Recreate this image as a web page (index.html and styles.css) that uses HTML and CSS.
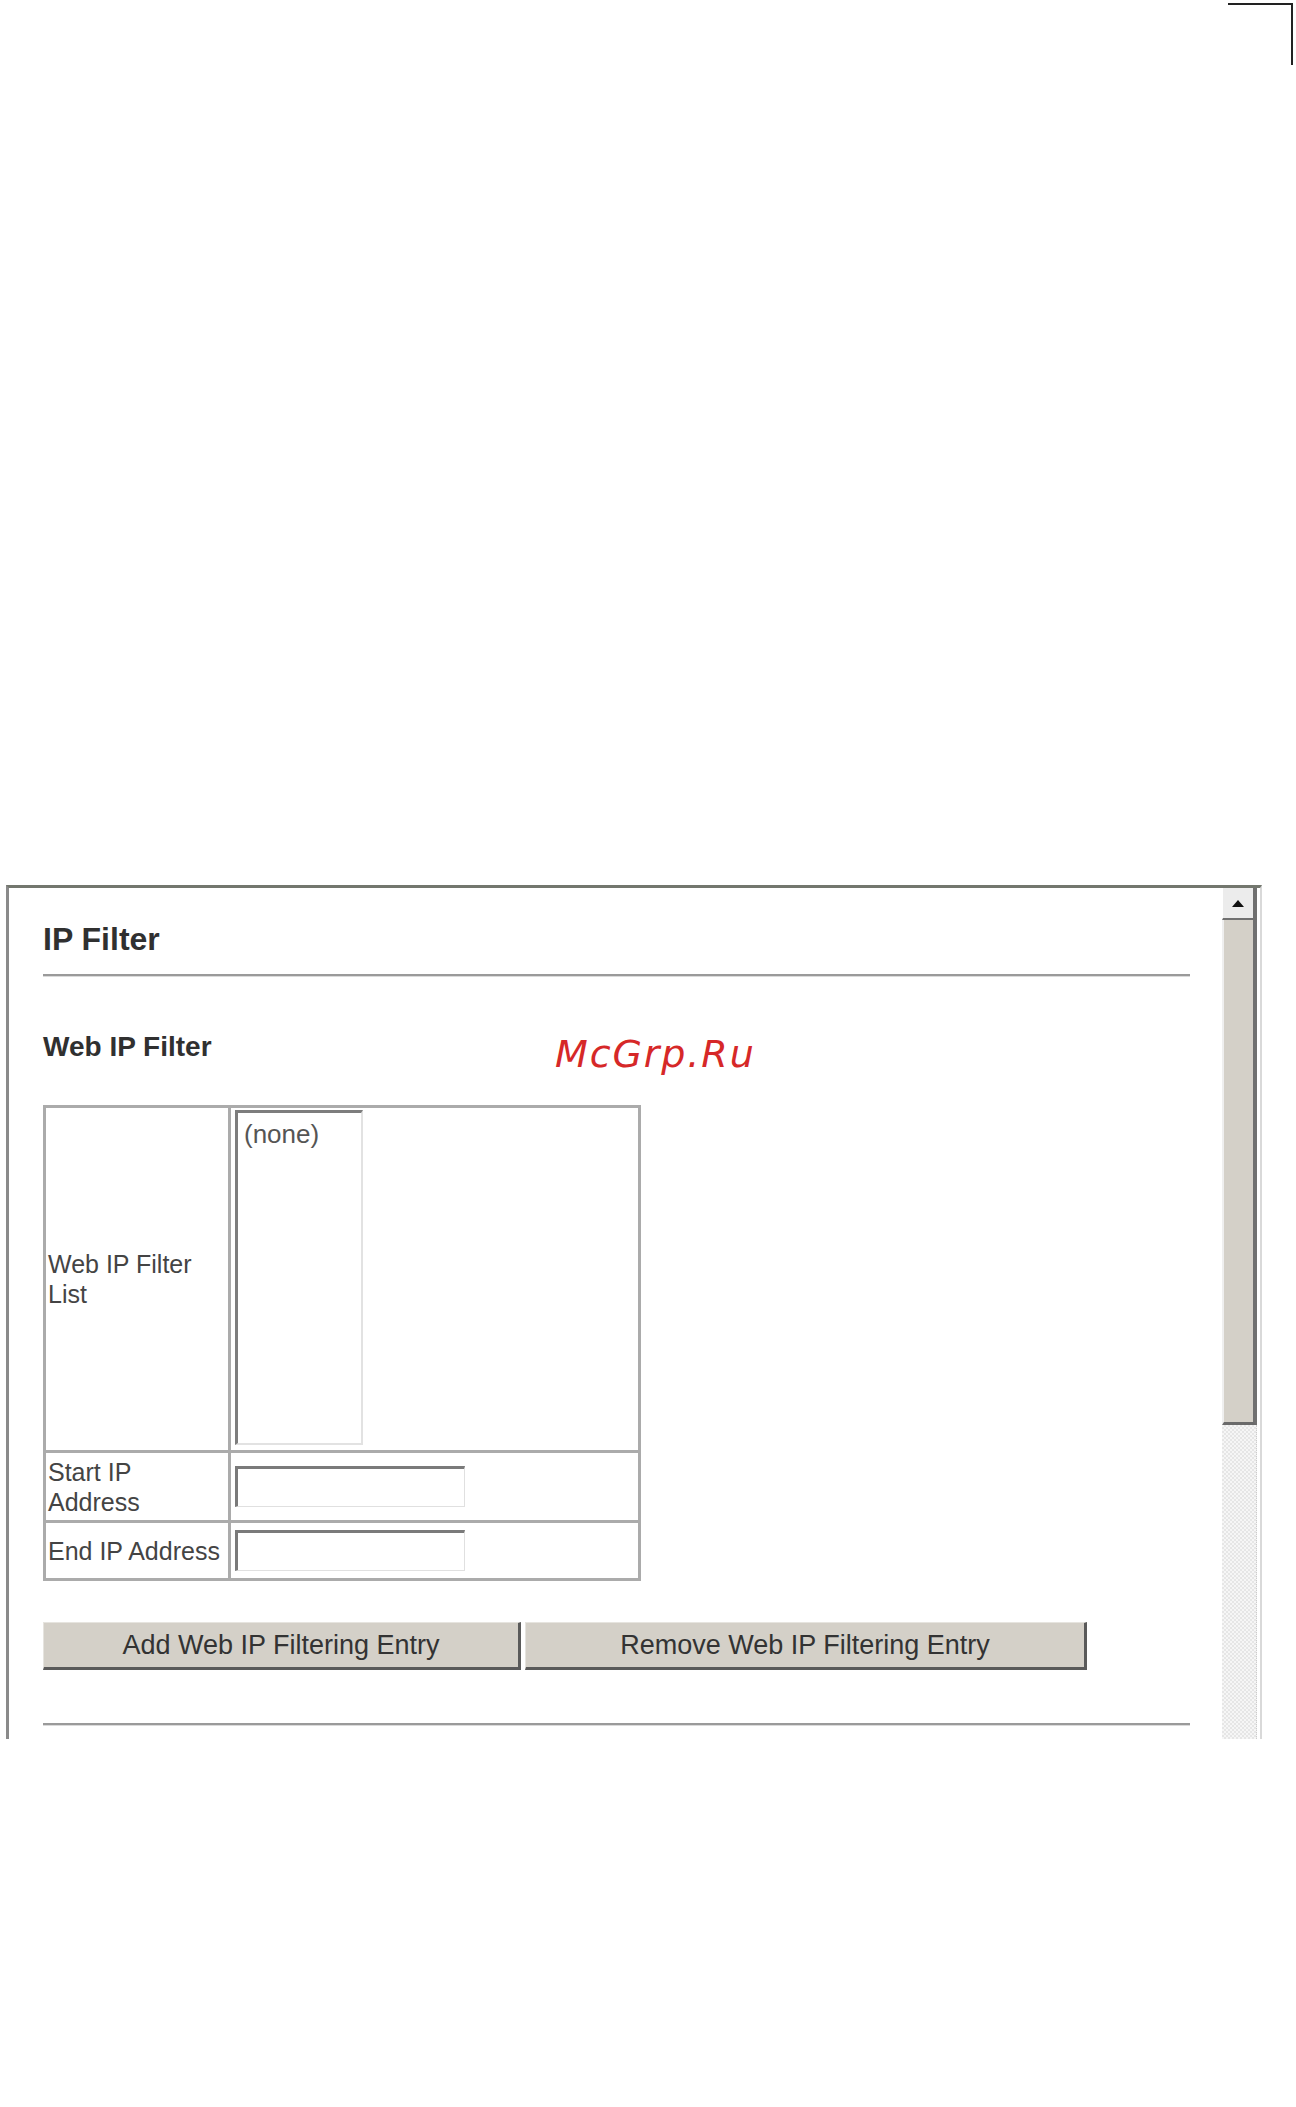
FILE: index.html
```html
<!DOCTYPE html>
<html lang="en">
<head>
<meta charset="utf-8">
<title>IP Filter</title>
<link rel="stylesheet" href="styles.css">
</head>
<body>
<div class="cropmark"></div>
<div class="watermark">McGrp.Ru</div>
<div class="frame">
  <div class="content">
    <h1 class="title">IP Filter</h1>
    <div class="rule"></div>
    <h2 class="subtitle">Web IP Filter</h2>
    <div class="ftable">
      <div class="cell lbl">Web IP Filter List</div>
      <div class="cell val top"><div class="listbox"><div class="opt">(none)</div></div></div>
      <div class="cell lbl">Start IP Address</div>
      <div class="cell val"><input class="ipinput" type="text"></div>
      <div class="cell lbl last">End IP Address</div>
      <div class="cell val last"><input class="ipinput" type="text"></div>
    </div>
    <div class="buttons">
      <button class="btn btn-add" type="button">Add Web IP Filtering Entry</button>
      <button class="btn btn-remove" type="button">Remove Web IP Filtering Entry</button>
    </div>
    <div class="rule rule-bottom"></div>
  </div>
  <div class="scrollbar">
    <div class="sb-up"><svg width="12" height="7" viewBox="0 0 12 7"><polygon points="0,7 6,0 12,7" fill="#111"/></svg></div>
    <div class="sb-thumb"></div>
    <div class="sb-track"></div>
  </div>
</div>
</body>
</html>
```
FILE: styles.css
```css
html, body {
  margin: 0;
  background: #fff;
}
body {
  font-family: "Liberation Sans", Arial, sans-serif;
  width: 1296px;
  height: 2107px;
  position: relative;
  overflow: hidden;
}
.cropmark {
  margin: 3px 0 0 1228px;
  width: 63px;
  height: 60px;
  border-top: 2px solid #222;
  border-right: 2px solid #222;
}
.watermark {
  position: absolute;
  left: 555px;
  top: 1035px;
  font-family: "DejaVu Sans", sans-serif;
  font-style: italic;
  font-size: 38px;
  line-height: 38px;
  letter-spacing: 1.9px;
  color: #d62828;
}
.frame {
  margin: 820px 0 0 6px;
  width: 1256px;
  height: 854px;
  box-sizing: border-box;
  border-top: 3px solid #73776e;
  border-left: 3px solid #8a8a8a;
  border-right: 2px solid #d9d9d9;
  display: flex;
  overflow: hidden;
  background: #fff;
}
.content {
  flex: 1;
  padding: 0 32px 0 34px;
}
.title {
  margin: 33px 0 0;
  font-size: 32px;
  line-height: 36px;
  font-weight: bold;
  color: #303030;
}
.rule {
  margin-top: 17px;
  height: 0;
  border-top: 2px solid #9a9a9a;
  border-bottom: 1px solid #dadada;
}
.subtitle {
  margin: 54px 0 0;
  font-size: 28px;
  line-height: 32px;
  font-weight: bold;
  color: #303030;
}
.ftable {
  margin-top: 42px;
  width: 598px;
  box-sizing: border-box;
  border: 3px solid #ababab;
  display: grid;
  grid-template-columns: 185px 407px;
  grid-template-rows: 345px 70px 55px;
}
.cell {
  box-sizing: border-box;
  border-bottom: 3px solid #ababab;
  display: flex;
  align-items: center;
  font-size: 25px;
  line-height: 30px;
  color: #444;
}
.cell.last {
  border-bottom: none;
}
.lbl {
  border-right: 3px solid #ababab;
  padding-left: 2px;
}
.val {
  padding-left: 4px;
}
.val.top {
  align-items: flex-start;
  padding-top: 2px;
}
.listbox {
  width: 128px;
  height: 335px;
  box-sizing: border-box;
  border-top: 3px solid #7d7d7d;
  border-left: 3px solid #7d7d7d;
  border-right: 2px solid #e2e2e2;
  border-bottom: 2px solid #e2e2e2;
  padding: 6px 0 0 6px;
  font-size: 26px;
  line-height: 30px;
  color: #555;
}
.ipinput {
  width: 230px;
  height: 41px;
  box-sizing: border-box;
  margin: 0;
  padding: 0;
  border-top: 3px solid #7a7a7a;
  border-left: 3px solid #7a7a7a;
  border-right: 1px solid #e0e0e0;
  border-bottom: 1px solid #e0e0e0;
  background: #fff;
  outline: none;
}
.buttons {
  margin-top: 41px;
  display: flex;
  gap: 4px;
}
.btn {
  height: 48px;
  box-sizing: border-box;
  margin: 0;
  padding: 0;
  background: #d4d0c8;
  border: none;
  border-top: 1px solid #e6e4df;
  border-left: 1px solid #e6e4df;
  border-right: 3px solid #5a5a5a;
  border-bottom: 3px solid #5a5a5a;
  font-family: inherit;
  font-size: 27px;
  color: #333;
}
.btn-add {
  width: 478px;
}
.btn-remove {
  width: 562px;
}
.rule-bottom {
  margin-top: 53px;
}
.scrollbar {
  width: 35px;
  margin-right: 3px;
  flex: none;
  display: flex;
  flex-direction: column;
}
.sb-up {
  height: 32px;
  flex: none;
  box-sizing: border-box;
  background: #ececec;
  border-left: 1px solid #fff;
  border-right: 4px solid #707070;
  border-bottom: 2px solid #707070;
  display: flex;
  align-items: center;
  justify-content: center;
}
.sb-thumb {
  height: 505px;
  flex: none;
  box-sizing: border-box;
  background: #d4d0c8;
  border-left: 2px solid #efefef;
  border-right: 4px solid #707070;
  border-bottom: 3px solid #6a6a6a;
}
.sb-track {
  flex: 1;
  background: repeating-conic-gradient(#e6e6e6 0 25%, #f6f6f6 0 50%) 0 0 / 4px 4px;
  border-right: 1px dotted #cccccc;
}
```
